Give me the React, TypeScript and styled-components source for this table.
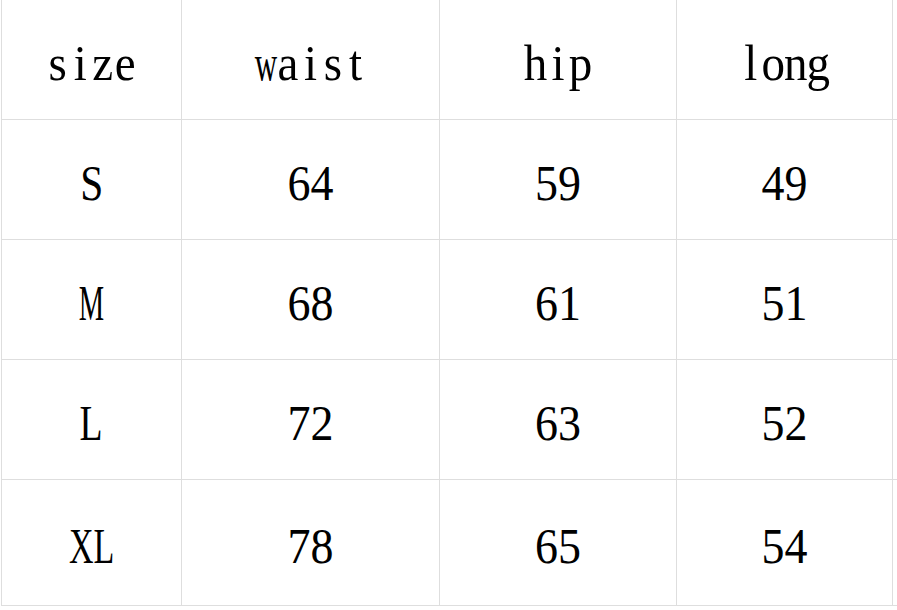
import React from 'react';
import styled, { createGlobalStyle } from 'styled-components';

const GlobalStyle = createGlobalStyle`
  html, body {
    margin: 0;
    padding: 0;
    background: #ffffff;
    overflow: hidden;
  }
`;

const header = ['size', 'waist', 'hip', 'long'];

const rows = [
  { size: 'S', squeeze: 0.9, values: ['64', '59', '49'] },
  { size: 'M', squeeze: 0.62, values: ['68', '61', '51'] },
  { size: 'L', squeeze: 0.82, values: ['72', '63', '52'] },
  { size: 'XL', squeeze: 0.74, values: ['78', '65', '54'] },
];

// wide letters get pulled in so they fit the half-width box
const narrowBy: Record<string, number> = { w: 0.66, m: 0.66 };

// header words are set half-width, one fixed box per letter
const MonoWord = ({ text }: { text: string }) => (
  <HeadText>
    {text.split('').map((ch, i) => (
      <HeadChar key={i}>
        <Glyph $sx={narrowBy[ch] ?? 1}>{ch}</Glyph>
      </HeadChar>
    ))}
  </HeadText>
);

export default function App() {
  return (
    <>
      <GlobalStyle />
      <Sheet>
        {header.map((h) => (
          <Cell key={h}>
            <MonoWord text={h} />
          </Cell>
        ))}
        <Cell />
        {rows.map((row) => (
          <React.Fragment key={row.size}>
            <Cell>
              <ValueText $squeeze={row.squeeze}>{row.size}</ValueText>
            </Cell>
            {row.values.map((v, i) => (
              <Cell key={i}>
                <ValueText>{v}</ValueText>
              </Cell>
            ))}
            <Cell />
          </React.Fragment>
        ))}
      </Sheet>
    </>
  );
}

const Sheet = styled.div`
  display: grid;
  grid-template-columns: 180px 258px 237px 216px 40px;
  grid-template-rows: 120px 120px 120px 120px 126px;
  width: 935px;
  margin-left: 1px;
  border-left: 1px solid #dedede;
`;

const Cell = styled.div`
  display: flex;
  align-items: center;
  justify-content: center;
  box-sizing: border-box;
  border-right: 1px solid #dedede;
  border-bottom: 1px solid #dedede;
`;

const HeadText = styled.span`
  display: inline-flex;
  font-family: 'Liberation Serif', 'Times New Roman', serif;
  font-size: 47px;
  color: #000000;
  line-height: 1;
  margin-top: 6px;
  transform: scaleY(1.1);
`;

const HeadChar = styled.span`
  display: inline-flex;
  justify-content: center;
  width: 22.5px;
`;

const Glyph = styled.span<{ $sx: number }>`
  display: inline-block;
  flex: none;
  transform: scaleX(${(p) => p.$sx});
`;

const ValueText = styled.span<{ $squeeze?: number }>`
  font-family: 'Liberation Serif', 'Times New Roman', serif;
  font-size: 46px;
  color: #000000;
  line-height: 1;
  margin-top: 8px;
  display: inline-block;
  transform: scale(${(p) => p.$squeeze ?? 1}, 1.08);
`;
